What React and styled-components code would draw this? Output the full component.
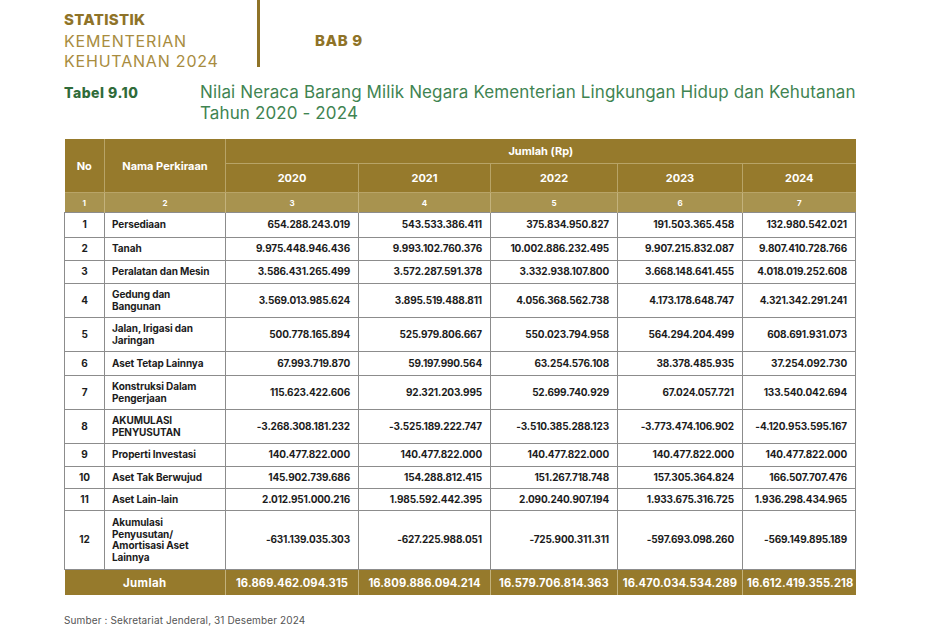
import React from "react";
import styled, { createGlobalStyle } from "styled-components";

const GlobalStyle = createGlobalStyle`
  body {
    margin: 0;
    background: #ffffff;
    font-family: "Inter", "Liberation Sans", sans-serif;
  }
`;

const GOLD = "#967a2c";
const GOLD_LIGHT = "#a8934f";

const Page = styled.div`
  width: 927px;
  height: 636px;
  padding-left: 64px;
  box-sizing: border-box;
  overflow: hidden;
`;

const TopBar = styled.div`
  display: flex;
  align-items: stretch;
  height: 67px;
`;

const Brand = styled.div`
  width: 193px;
  padding-top: 11px;
  color: #a88c3e;
  font-size: 16px;
  line-height: 20px;
  letter-spacing: 0.8px;
`;

const BrandStrong = styled.div`
  color: #8f7328;
  font-weight: 800;
  font-size: 15px;
  line-height: 18px;
  letter-spacing: 0.3px;
  margin-bottom: 2px;
`;

const Divider = styled.div`
  width: 3px;
  background: #8f7328;
`;

const Chapter = styled.div`
  display: flex;
  align-items: center;
  padding-left: 55px;
  padding-top: 14px;
  color: #8f7328;
  font-weight: 800;
  font-size: 15px;
  letter-spacing: 0.6px;
`;

const TitleRow = styled.div`
  display: flex;
  margin-top: 15px;
`;

const TableLabel = styled.div`
  width: 136px;
  color: #2f6b39;
  font-weight: 800;
  font-size: 14px;
  line-height: 21px;
  letter-spacing: 0.5px;
`;

const TableTitle = styled.div`
  color: #3f8452;
  font-size: 17px;
  line-height: 21px;
  letter-spacing: 0.12px;
`;

const Table = styled.table`
  margin-top: 15px;
  width: 791px;
  border-collapse: collapse;
  table-layout: fixed;
  font-size: 10px;
  color: #1c1c1c;
`;

const HeadCell = styled.th`
  background: ${GOLD};
  color: #ffffff;
  font-weight: 700;
  font-size: 11px;
  height: ${(p) => p.$h || 24}px;
  padding: 0;
  border: 1px solid #b8a467;
  border-top: none;
  text-align: center;
  &:first-child {
    border-left: none;
  }
  &:last-child {
    border-right: none;
  }
`;

const IndexCell = styled.td`
  background: ${GOLD_LIGHT};
  color: #ffffff;
  font-weight: 700;
  font-size: 8px;
  height: 19px;
  padding: 0;
  text-align: center;
  border: 1px solid #c3b27c;
  border-bottom: none;
  &:first-child {
    border-left: none;
  }
  &:last-child {
    border-right: none;
  }
`;

const Cell = styled.td`
  border: 1px solid #8c8c8c;
  padding: 0 ${(p) => (p.$align === "left" ? 7 : 8)}px;
  height: ${(p) => p.$h}px;
  font-weight: 700;
  line-height: 11.5px;
  letter-spacing: ${(p) => (p.$align === "left" ? "-0.1px" : "-0.15px")};
  text-align: ${(p) => p.$align || "right"};
  vertical-align: middle;
  box-sizing: border-box;
`;

const TotalCell = styled.td`
  background: ${GOLD};
  color: #ffffff;
  font-weight: 700;
  font-size: 11.2px;
  height: 25px;
  padding: 0 4px;
  text-align: center;
  letter-spacing: 0.1px;
  border-left: 1px solid #c3b27c;
  &:first-child {
    border-left: none;
    font-size: 11.5px;
    letter-spacing: 0.4px;
  }
`;

const Source = styled.div`
  margin-top: 19px;
  color: #555555;
  font-size: 10px;
  letter-spacing: 0.12px;
`;

const rows = [
  ["1", "Persediaan", 25, ["654.288.243.019", "543.533.386.411", "375.834.950.827", "191.503.365.458", "132.980.542.021"]],
  ["2", "Tanah", 23, ["9.975.448.946.436", "9.993.102.760.376", "10.002.886.232.495", "9.907.215.832.087", "9.807.410.728.766"]],
  ["3", "Peralatan dan Mesin", 23, ["3.586.431.265.499", "3.572.287.591.378", "3.332.938.107.800", "3.668.148.641.455", "4.018.019.252.608"]],
  ["4", "Gedung dan Bangunan", 34, ["3.569.013.985.624", "3.895.519.488.811", "4.056.368.562.738", "4.173.178.648.747", "4.321.342.291.241"]],
  ["5", "Jalan, Irigasi dan Jaringan", 34, ["500.778.165.894", "525.979.806.667", "550.023.794.958", "564.294.204.499", "608.691.931.073"]],
  ["6", "Aset Tetap Lainnya", 24, ["67.993.719.870", "59.197.990.564", "63.254.576.108", "38.378.485.935", "37.254.092.730"]],
  ["7", "Konstruksi Dalam Pengerjaan", 34, ["115.623.422.606", "92.321.203.995", "52.699.740.929", "67.024.057.721", "133.540.042.694"]],
  ["8", "AKUMULASI PENYUSUTAN", 34, ["-3.268.308.181.232", "-3.525.189.222.747", "-3.510.385.288.123", "-3.773.474.106.902", "-4.120.953.595.167"]],
  ["9", "Properti Investasi", 23, ["140.477.822.000", "140.477.822.000", "140.477.822.000", "140.477.822.000", "140.477.822.000"]],
  ["10", "Aset Tak Berwujud", 22, ["145.902.739.686", "154.288.812.415", "151.267.718.748", "157.305.364.824", "166.507.707.476"]],
  ["11", "Aset Lain-lain", 22, ["2.012.951.000.216", "1.985.592.442.395", "2.090.240.907.194", "1.933.675.316.725", "1.936.298.434.965"]],
  ["12", "Akumulasi Penyusutan/ Amortisasi Aset Lainnya", 59, ["-631.139.035.303", "-627.225.988.051", "-725.900.311.311", "-597.693.098.260", "-569.149.895.189"]],
];

const totals = ["16.869.462.094.315", "16.809.886.094.214", "16.579.706.814.363", "16.470.034.534.289", "16.612.419.355.218"];
const years = ["2020", "2021", "2022", "2023", "2024"];
const widths = [40, 121, 133, 132, 127, 125, 113];

const App = () => {
  return (
    <>
      <GlobalStyle />
      <Page>
        <TopBar>
          <Brand>
            <BrandStrong>STATISTIK</BrandStrong>
            KEMENTERIAN
            <br />
            KEHUTANAN 2024
          </Brand>
          <Divider />
          <Chapter>BAB 9</Chapter>
        </TopBar>
        <TitleRow>
          <TableLabel>Tabel 9.10</TableLabel>
          <TableTitle>
            Nilai Neraca Barang Milik Negara Kementerian Lingkungan Hidup dan Kehutanan
            <br />
            Tahun 2020 - 2024
          </TableTitle>
        </TitleRow>
        <Table>
          <colgroup>
            {widths.map((w, i) => (
              <col key={i} style={{ width: w }} />
            ))}
          </colgroup>
          <thead>
            <tr>
              <HeadCell rowSpan={2}>No</HeadCell>
              <HeadCell rowSpan={2}>Nama Perkiraan</HeadCell>
              <HeadCell colSpan={5} $h={24}>Jumlah (Rp)</HeadCell>
            </tr>
            <tr>
              {years.map((y) => (
                <HeadCell key={y} $h={28}>{y}</HeadCell>
              ))}
            </tr>
            <tr>
              {[1, 2, 3, 4, 5, 6, 7].map((n) => (
                <IndexCell key={n}>{n}</IndexCell>
              ))}
            </tr>
          </thead>
          <tbody>
            {rows.map(([no, name, h, vals]) => (
              <tr key={no}>
                <Cell $h={h} $align="center">{no}</Cell>
                <Cell $h={h} $align="left">{name}</Cell>
                {vals.map((v, i) => (
                  <Cell key={i} $h={h}>{v}</Cell>
                ))}
              </tr>
            ))}
            <tr>
              <TotalCell colSpan={2}>Jumlah</TotalCell>
              {totals.map((t, i) => (
                <TotalCell key={i}>{t}</TotalCell>
              ))}
            </tr>
          </tbody>
        </Table>
        <Source>Sumber : Sekretariat Jenderal, 31 Desember 2024</Source>
      </Page>
    </>
  );
};

export default App;
